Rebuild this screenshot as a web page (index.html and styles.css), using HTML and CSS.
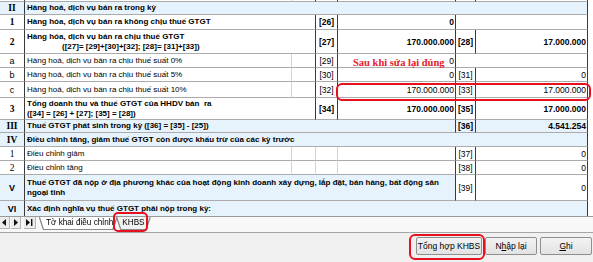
FILE: index.html
```html
<!DOCTYPE html>
<html lang="vi">
<head>
  <meta charset="utf-8">
  <title>KHBS</title>
  <link rel="stylesheet" href="styles.css">
</head>
<body>
  <div class="sheet">
    <table class="grid">
      <colgroup>
        <col class="c-no"><col class="c-txt"><col class="c-gap"><col class="c-code"><col class="c-val"><col class="c-code2"><col class="c-val2">
      </colgroup>
      <tr class="r-top">
        <td class="dk"></td><td></td><td class="dk"></td><td class="dk"></td><td class="dk"></td><td class="dk"></td><td class="dk"></td>
      </tr>
      <tr class="sec h13">
        <td class="num dk">II</td>
        <td colspan="6" class="b dk">Hàng hoá, dịch vụ bán ra trong kỳ</td>
      </tr>
      <tr class="h15">
        <td class="num dk">1</td>
        <td colspan="2" class="b dk">Hàng hóa, dịch vụ bán ra không chịu thuế GTGT</td>
        <td class="code b dk">[26]</td>
        <td class="val b dk">0</td>
        <td colspan="2" class="dk"></td>
      </tr>
      <tr class="h24">
        <td class="num dk">2</td>
        <td colspan="2" class="b dk">Hàng hóa, dịch vụ bán ra chịu thuế GTGT<br><span class="indent">([27]= [29]+[30]+[32]; [28]= [31]+[33])</span></td>
        <td class="code b dk">[27]</td>
        <td class="val b dk">170.000.000</td>
        <td class="code b dk">[28]</td>
        <td class="val b dk">17.000.000</td>
      </tr>
      <tr class="h14">
        <td class="sub dk">a</td>
        <td>Hàng hoá, dịch vụ bán ra chịu thuế suất 0%</td>
        <td class="dk"></td>
        <td class="code dk">[29]</td>
        <td class="val dk">0</td>
        <td colspan="2" class="dk"></td>
      </tr>
      <tr class="h14">
        <td class="sub dk">b</td>
        <td>Hàng hoá, dịch vụ bán ra chịu thuế suất 5%</td>
        <td class="dk"></td>
        <td class="code dk">[30]</td>
        <td class="val dk">0</td>
        <td class="code dk">[31]</td>
        <td class="val dk">0</td>
      </tr>
      <tr class="h16">
        <td class="sub dk">c</td>
        <td>Hàng hoá, dịch vụ bán ra chịu thuế suất 10%</td>
        <td class="dk"></td>
        <td class="code dk">[32]</td>
        <td class="val dk">170.000.000</td>
        <td class="code dk">[33]</td>
        <td class="val dk">17.000.000</td>
      </tr>
      <tr class="h22">
        <td class="num dk">3</td>
        <td colspan="2" class="b dk">Tổng doanh thu và thuế GTGT của HHDV bán&nbsp; ra<br>([34] = [26] + [27]; [35] = [28])</td>
        <td class="code b dk">[34]</td>
        <td class="val b dk">170.000.000</td>
        <td class="code b dk">[35]</td>
        <td class="val b dk">17.000.000</td>
      </tr>
      <tr class="sec h13">
        <td class="num dk">III</td>
        <td colspan="4" class="b dk">Thuế GTGT phát sinh trong kỳ ([36] = [35] - [25])</td>
        <td class="code b dk">[36]</td>
        <td class="val b dk">4.541.254</td>
      </tr>
      <tr class="sec h14">
        <td class="num dk">IV</td>
        <td colspan="6" class="b dk">Điều chỉnh tăng, giảm thuế GTGT còn được khấu trừ của các kỳ trước</td>
      </tr>
      <tr class="h14">
        <td class="num reg dk">1</td>
        <td>Điều chỉnh giảm</td>
        <td></td>
        <td></td>
        <td class="dk"></td>
        <td class="code dk">[37]</td>
        <td class="val dk">0</td>
      </tr>
      <tr class="h14">
        <td class="num reg dk">2</td>
        <td>Điều chỉnh tăng</td>
        <td></td>
        <td></td>
        <td class="dk"></td>
        <td class="code dk">[38]</td>
        <td class="val dk">0</td>
      </tr>
      <tr class="sec h26">
        <td class="sub b dk">V</td>
        <td colspan="4" class="b dk">Thuế GTGT đã nộp ở địa phương khác của hoạt động kinh doanh xây dựng, lắp đặt, bán hàng, bất động sản<br>ngoại tỉnh</td>
        <td class="code white dk">[39]</td>
        <td class="val white dk">0</td>
      </tr>
      <tr class="sec h16">
        <td class="sub b dk">VI</td>
        <td colspan="6" class="b dk">Xác định nghĩa vụ thuế GTGT phải nộp trong kỳ:</td>
      </tr>
    </table>
  </div>

  <div class="tabs">
    <div class="nav">
      <span class="nav-btn"><svg width="5" height="7" viewBox="0 0 5 7"><path d="M4 0 L0 3.5 L4 7 Z" fill="#111"/></svg></span>
      <span class="nav-btn"><svg width="5" height="7" viewBox="0 0 5 7"><path d="M1 0 L5 3.5 L1 7 Z" fill="#111"/></svg></span>
      <span class="nav-btn wide"><svg width="7" height="7" viewBox="0 0 7 7"><path d="M0 0 L4 3.5 L0 7 Z" fill="#111"/><rect x="5" y="0" width="1.4" height="7" fill="#111"/></svg></span>
    </div>
    <div class="tab-set">
      <span class="tab active">Tờ khai điều chỉnh</span>
      <span class="tab">KHBS</span>
    </div>
  </div>

  <div class="footer">
    <button class="btn w-sum">Tổng hợp KHBS</button>
    <button class="btn w-std">N<u>h</u>ập lại</button>
    <button class="btn w-std"><u>G</u>hi</button>
  </div>

  <div class="note">Sau khi sửa lại đúng</div>
  <div class="mark mark-row"></div>
  <div class="mark mark-tab"></div>
  <div class="mark mark-btn"></div>
</body>
</html>
```

FILE: styles.css
```css
* {box-sizing: border-box;}

body {
  margin: 0;
  width: 593px; height: 262px;
  overflow: hidden;
  position: relative;
  background: #fff;
  color: #000;
  font-family: "Liberation Sans", Arial, sans-serif;
  font-size: 8px;
}

/* sheet */
.sheet {height: 216px; overflow: hidden;}
.grid {
  table-layout: fixed;
  border-collapse: separate; border-spacing: 0;
  width: 588px;
}
.c-no {width: 25px;}
.c-txt {width: 267px;}
.c-gap {width: 24px;}
.c-code {width: 22px;}
.c-val {width: 118px;}
.c-code2 {width: 20px;}
.c-val2 {width: 112px;}

.grid td {
  padding: 0 2px;
  border-right: 1px solid #d4d4d4;
  border-bottom: 1px solid #ababab;
  line-height: 10px;
  white-space: nowrap;
  overflow: hidden;
  vertical-align: middle;
}
.grid td.dk {border-right-color: #3a3a3a;}

.r-top td {height: 2px;}
.h13 td {height: 13px;}
.h14 td {height: 14px;}
.h15 td {height: 15px;}
.h16 td {height: 16px;}
.h22 td {height: 22px;}
.h24 td {height: 24px;}
.h26 td {height: 26px;}

.sec td {background: #e6f2fc;}
.sec td.white {background: #fff;}

.grid td.num {
  text-align: center; padding: 0;
  font-family: "Liberation Serif", "Times New Roman", serif;
  font-weight: bold; font-size: 9.5px;
}
.grid td.num.reg {font-weight: normal;}
.grid td.sub {text-align: center; padding: 0; font-size: 9px;}
.b {font-weight: bold;}
.indent {padding-left: 35px;}
.grid td.code {text-align: center; padding: 0; font-size: 8.5px;}
.grid td.val {text-align: right; padding-right: 1px; font-size: 8.5px;}

/* sheet tabs */
.tabs {
  height: 17px;
  display: flex; align-items: flex-start;
  background: #f8f8f8;
  border-top: 1px solid #9a9a9a;
  border-bottom: 1px solid #a6a6a6;
}
.nav {display: flex; gap: 1px;}
.nav-btn {
  width: 10px; height: 12px;
  display: flex; align-items: center; justify-content: center;
  background: #ececec;
  border-right: 1px solid #b4b4b4;
  border-bottom: 1px solid #b4b4b4;
}
.nav-btn.wide {width: 12px; margin-left: 2px;}
.tab-set {
  display: flex; gap: 1px; margin-left: 4px;
  filter: drop-shadow(1px 0 0 #8c8c8c) drop-shadow(-1px 0 0 #8c8c8c) drop-shadow(0 1px 0 #8c8c8c);
}
.tab {
  height: 12px;
  padding: 0 5px;
  line-height: 12px;
  font-size: 8.2px;
  background: #f2f2f2;
  clip-path: polygon(0 0, 100% 0, calc(100% - 4px) 100%, 4px 100%);
}
.tab.active {background: #fff; padding: 0 3px 0 6px;}

/* buttons */
.footer {
  height: 29px;
  display: flex; justify-content: flex-end; align-items: flex-start;
  gap: 3px;
  padding: 4px 1px 0 0;
  background: #f0f0f0;
}
.btn {
  height: 18px;
  padding: 0;
  font-family: "Liberation Sans", Arial, sans-serif;
  font-size: 8.5px; color: #000;
  background: linear-gradient(#f3f3f3, #e2e2e2);
  border: 1px solid #8f8f8f;
  border-radius: 2px;
}
.w-sum {width: 66px;}
.w-std {width: 52px;}

/* hand drawn annotations over the screenshot */
.note {
  position: absolute; left: 353px; top: 57px;
  font-family: "Liberation Serif", "Times New Roman", serif;
  font-weight: bold; font-size: 10.5px;
  color: #e3202b;
}
.mark {
  position: absolute;
  border: 2px solid #e8101c;
  border-radius: 6px;
}
.mark-row {left: 336px; top: 83px; width: 255px; height: 18px;}
.mark-tab {left: 113px; top: 212px; width: 35px; height: 20px; border-radius: 5px;}
.mark-btn {left: 409px; top: 234px; width: 76px; height: 26px;}
```
